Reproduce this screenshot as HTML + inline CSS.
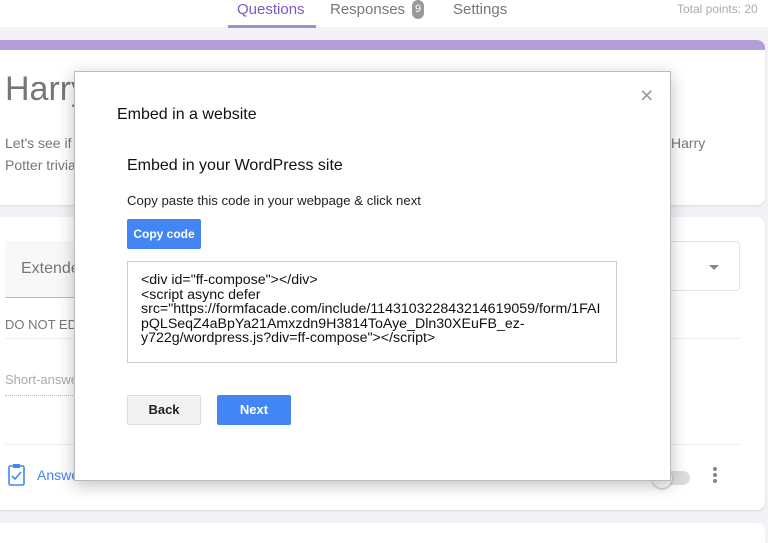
<!DOCTYPE html>
<html><head><style>
*{margin:0;padding:0;box-sizing:border-box}
body{width:768px;height:533px;overflow:hidden;background:#f3f2f7;font-family:"Liberation Sans",sans-serif;position:relative}
.abs{position:absolute}
.t{white-space:nowrap}
</style></head><body>
<div class="abs" style="left:0;top:0;width:768px;height:27px;background:#fff"></div>
<div class="abs t" style="left:237px;top:1px;font-size:15px;color:#7e57c2">Questions</div>
<div class="abs" style="left:228px;top:25px;width:88px;height:3px;background:#a08fd0"></div>
<div class="abs t" style="left:330px;top:1px;font-size:15px;color:#777">Responses</div>
<div class="abs" style="left:412px;top:0px;width:12px;height:19px;border-radius:6px;background:#999;color:#fff;font-size:11px;text-align:center;line-height:19px">9</div>
<div class="abs t" style="left:453px;top:1px;font-size:15px;color:#777">Settings</div>
<div class="abs t" style="left:677px;top:2px;font-size:12px;color:#aaa">Total points: 20</div>

<div class="abs" style="left:0;top:40px;width:765px;height:165px;background:#fff;border-radius:0 8px 8px 0;overflow:hidden;box-shadow:0 1px 2px rgba(0,0,0,.1)">
 <div style="height:10px;background:#b39ddb"></div>
</div>
<div class="abs t" style="left:5px;top:70px;font-size:34px;color:#777">Harry</div>
<div class="abs t" style="left:5px;top:135px;font-size:14px;color:#777">Let's see if</div>
<div class="abs t" style="left:5px;top:157px;font-size:14px;color:#777">Potter trivia</div>
<div class="abs t" style="left:671px;top:135px;font-size:14px;color:#777">Harry</div>

<div class="abs" style="left:0;top:217px;width:765px;height:293px;background:#fff;border-radius:0 8px 8px 0;box-shadow:0 1px 2px rgba(0,0,0,.12)"></div>
<div class="abs" style="left:5px;top:241px;width:100px;height:57px;background:#f8f8f8;border-bottom:1px solid #bbb"></div>
<div class="abs t" style="left:21px;top:260px;font-size:16px;color:#777">Extended</div>
<div class="abs" style="left:600px;top:241px;width:140px;height:50px;border:1px solid #e4e4e4;border-radius:4px"></div>
<div class="abs" style="left:709px;top:265px;border-left:5px solid transparent;border-right:5px solid transparent;border-top:5px solid #888"></div>
<div class="abs t" style="left:5px;top:317px;font-size:13px;color:#777">DO NOT EDIT</div>
<div class="abs" style="left:5px;top:338px;width:735px;height:1px;background:#eee"></div>
<div class="abs t" style="left:5px;top:372px;font-size:13px;color:#aaa">Short-answer</div>
<div class="abs" style="left:5px;top:395px;width:100px;border-top:1px dotted #bbb"></div>
<div class="abs" style="left:5px;top:444px;width:735px;height:1px;background:#eee"></div>
<svg class="abs" style="left:7px;top:463px" width="20" height="24" viewBox="0 0 20 24"><rect x="2" y="3" width="15" height="19" rx="1.5" fill="none" stroke="#4285f4" stroke-width="1.6"/><rect x="6" y="1" width="7" height="4" fill="#4285f4"/><path d="M5 13l3 3 6-7" fill="none" stroke="#4285f4" stroke-width="1.6"/></svg>
<div class="abs t" style="left:37px;top:467px;font-size:14px;color:#4285f4">Answer</div>
<div class="abs" style="left:655px;top:471px;width:35px;height:14px;border-radius:7px;background:#ddd"></div>
<div class="abs" style="left:652px;top:468px;width:20px;height:20px;border-radius:10px;background:#fafafa;box-shadow:0 1px 2px rgba(0,0,0,.3)"></div>
<div class="abs" style="left:713px;top:467px;width:4px;height:4px;border-radius:2px;background:#888;box-shadow:0 6px 0 #888,0 12px 0 #888"></div>
<div class="abs" style="left:0;top:523px;width:765px;height:20px;background:#fff;border-radius:0 8px 0 0"></div>

<div class="abs" style="left:74px;top:71px;width:597px;height:410px;background:#fff;border:1px solid #bbb;box-shadow:0 4px 16px rgba(0,0,0,.25)"></div>
<div class="abs t" style="left:640px;top:82px;font-size:23px;color:#999">×</div>
<div class="abs t" style="left:117px;top:106px;font-size:16px;color:#111">Embed in a website</div>
<div class="abs t" style="left:127px;top:157px;font-size:16px;color:#111">Embed in your WordPress site</div>
<div class="abs t" style="left:127px;top:193px;font-size:13.2px;color:#222">Copy paste this code in your webpage &amp; click next</div>
<div class="abs" style="left:127px;top:219px;width:74px;height:30px;background:#4285f4;color:#fff;font-size:12px;font-weight:bold;text-align:center;line-height:30px;border-radius:2px">Copy code</div>
<div class="abs" style="left:127px;top:261px;width:490px;height:102px;border:1px solid #ccc;padding:11px 0 0 13px;font-size:14.2px;line-height:14.5px;color:#111;white-space:nowrap">&lt;div id="ff-compose"&gt;&lt;/div&gt;<br>&lt;script async defer<br>src="https://formfacade.com/include/114310322843214619059/form/1FAI<br>pQLSeqZ4aBpYa21Amxzdn9H3814ToAye_Dln30XEuFB_ez-<br>y722g/wordpress.js?div=ff-compose"&gt;&lt;/script&gt;</div>
<div class="abs" style="left:127px;top:395px;width:74px;height:30px;background:#f2f2f2;border:1px solid #ddd;color:#222;font-size:13px;font-weight:bold;text-align:center;line-height:28px;border-radius:2px">Back</div>
<div class="abs" style="left:217px;top:395px;width:74px;height:30px;background:#4285f4;color:#fff;font-size:13px;font-weight:bold;text-align:center;line-height:30px;border-radius:2px">Next</div>
</body></html>
